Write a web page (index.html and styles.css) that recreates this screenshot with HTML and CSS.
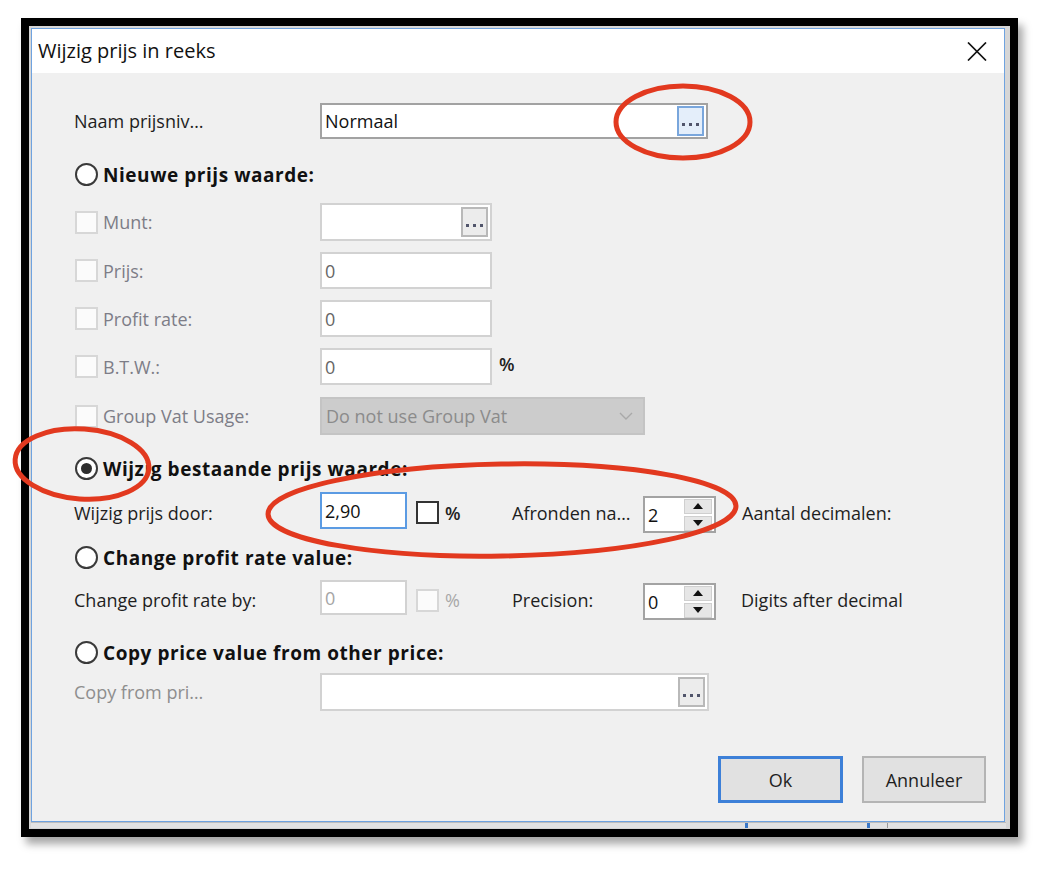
FILE: index.html
```html
<!DOCTYPE html>
<html lang="nl">
<head>
<meta charset="utf-8">
<title>Wijzig prijs in reeks</title>
<link rel="stylesheet" href="styles.css">
</head>
<body>
<div class="frame">
  <div class="dialog">
    <div class="titlebar">
      <span class="title">Wijzig prijs in reeks</span>
      <span class="close" aria-label="Sluiten">
        <svg width="20" height="19" viewBox="0 0 20 19"><path d="M1 0.5 L19 18.5 M19 0.5 L1 18.5" stroke="#111" stroke-width="1.7" fill="none"/></svg>
      </span>
    </div>

    <div class="body">
      <div class="row r-naam">
        <span class="lbl">Naam prijsniv…</span>
        <div class="field w-wide"><span class="val">Normaal</span><span class="dots-btn hot"><svg width="17" height="3" viewBox="0 0 17 3"><rect x="0" y="0" width="3" height="3"/><rect x="7" y="0" width="3" height="3"/><rect x="14" y="0" width="3" height="3"/></svg></span></div>
      </div>

      <div class="row r-opt1">
        <span class="opt"><span class="radio"></span>Nieuwe prijs waarde:</span>
      </div>

      <div class="row r-munt off">
        <span class="lbl"><span class="cb"></span>Munt:</span>
        <div class="field w-mid"><span class="val"></span><span class="dots-btn"><svg width="17" height="3" viewBox="0 0 17 3"><rect x="0" y="0" width="3" height="3"/><rect x="7" y="0" width="3" height="3"/><rect x="14" y="0" width="3" height="3"/></svg></span></div>
      </div>

      <div class="row r-std off">
        <span class="lbl"><span class="cb"></span>Prijs:</span>
        <div class="field w-mid"><span class="val">0</span></div>
      </div>

      <div class="row r-std off">
        <span class="lbl"><span class="cb"></span>Profit rate:</span>
        <div class="field w-mid"><span class="val">0</span></div>
      </div>

      <div class="row r-std off">
        <span class="lbl"><span class="cb"></span>B.T.W.:</span>
        <div class="field w-mid"><span class="val">0</span></div>
        <span class="pct dark">%</span>
      </div>

      <div class="row r-group off">
        <span class="lbl"><span class="cb"></span>Group Vat Usage:</span>
        <div class="combo"><span class="val">Do not use Group Vat</span>
          <svg class="chev" width="14" height="8" viewBox="0 0 14 8"><path d="M1 1 L7 7 L13 1" stroke="#a9a9a9" stroke-width="1.4" fill="none"/></svg>
        </div>
      </div>

      <div class="row r-opt2">
        <span class="opt"><span class="radio on"></span>Wijzig bestaande prijs waarde:</span>
      </div>

      <div class="row r-pair r-door">
        <span class="lbl">Wijzig prijs door:</span>
        <div class="field w-small focus top"><span class="val">2,90</span></div>
        <div class="pctbox"><span class="cb live"></span><span class="pct dark">%</span></div>
        <span class="lbl2">Afronden na…</span>
        <div class="spin bottom"><span class="val">2</span><span class="arrows"><span class="arr"><i class="tri up"></i></span><span class="arr"><i class="tri dn"></i></span></span></div>
        <span class="hint">Aantal decimalen:</span>
      </div>

      <div class="row r-opt3">
        <span class="opt"><span class="radio"></span>Change profit rate value:</span>
      </div>

      <div class="row r-pair r-by">
        <span class="lbl">Change profit rate by:</span>
        <div class="field w-small top faint"><span class="val">0</span></div>
        <div class="pctbox"><span class="cb"></span><span class="pct light">%</span></div>
        <span class="lbl2">Precision:</span>
        <div class="spin bottom"><span class="val">0</span><span class="arrows"><span class="arr"><i class="tri up"></i></span><span class="arr"><i class="tri dn"></i></span></span></div>
        <span class="hint h2">Digits after decimal</span>
      </div>

      <div class="row r-opt4">
        <span class="opt"><span class="radio"></span>Copy price value from other price:</span>
      </div>

      <div class="row r-copy off">
        <span class="lbl">Copy from pri…</span>
        <div class="field w-copy"><span class="val"></span><span class="dots-btn"><svg width="17" height="3" viewBox="0 0 17 3"><rect x="0" y="0" width="3" height="3"/><rect x="7" y="0" width="3" height="3"/><rect x="14" y="0" width="3" height="3"/></svg></span></div>
      </div>

      <div class="row r-buttons">
        <span class="btn default">Ok</span>
        <span class="btn">Annuleer</span>
      </div>
    </div>
  </div>
  <div class="under">
    <span class="gap g1"></span><span class="mark blue"></span>
    <span class="gap g2"></span><span class="mark blue"></span>
    <span class="gap g3"></span><span class="mark grey"></span>
  </div>
</div>

<svg class="marks" width="1058" height="870" viewBox="0 0 1058 870">
  <g fill="none" stroke="#e2391f" stroke-width="5">
    <ellipse cx="683" cy="122" rx="67" ry="36"/>
    <ellipse cx="82" cy="464" rx="67" ry="35" transform="rotate(4 82 464)"/>
    <ellipse cx="502" cy="510" rx="234" ry="46" transform="rotate(-1 502 510)"/>
  </g>
</svg>
</body>
</html>
```

FILE: styles.css
```css
* { box-sizing: border-box; }

html, body {
  margin: 0;
  background: #fff;
}

body {
  position: relative;
  width: 1058px;
  height: 870px;
  overflow: hidden;
  font-family: "Open Sans", "Noto Sans", "Liberation Sans", sans-serif;
  font-size: 18px;
  color: #1e1e1e;
}

/* outer black frame around the window */
.frame {
  margin: 18px 0 0 21px;
  width: 997px;
  height: 819px;
  border: 8px solid #000;
  background: #d6d6d6;
  padding: 2px 4px 0 2px;
  box-shadow: 5px 7px 8px rgba(0, 0, 0, 0.35);
  display: flex;
  flex-direction: column;
}

.dialog {
  width: 974px;
  height: 794px;
  border: 1px solid #6fa3e0;
  background: #f0f0f0;
  display: flex;
  flex-direction: column;
}

.titlebar {
  height: 44px;
  flex: none;
  background: #fff;
  display: flex;
  align-items: center;
  justify-content: space-between;
  padding: 0 17px 0 6px;
}

.title {
  font-size: 20px;
  color: #111;
  margin-top: -1px;
}

.close {
  display: flex;
  width: 20px;
  height: 19px;
}

/* window content */
.body {
  padding: 0 18px 0 42px;
  display: flex;
  flex-direction: column;
}

.row {
  display: flex;
  align-items: center;
}

.lbl {
  width: 246px;
  flex: none;
  display: flex;
  align-items: center;
  gap: 5px;
}

.off .lbl { color: #7d7d87; }
.r-copy .lbl { color: #8e8e8e; }

.r-naam   { margin-top: 30px; height: 36px; }
.r-opt1   { margin-top: 24px; height: 23px; }
.r-munt   { margin-top: 17px; height: 38px; }
.r-std    { margin-top: 11px; height: 37px; }
.r-group  { margin-top: 12px; height: 38px; }
.r-opt2   { margin-top: 22px; height: 23px; }
.r-door   { margin-top: 12px; height: 41px; }
.r-opt3   { margin-top: 13px; height: 23px; }
.r-by     { margin-top: 11px; height: 40px; }
.r-opt4   { margin-top: 21px; height: 23px; }
.r-copy   { margin-top: 9px;  height: 38px; }
.r-buttons {
  margin-top: 45px;
  height: 47px;
  justify-content: flex-end;
  gap: 19px;
}

/* radio options */
.opt {
  display: flex;
  align-items: center;
  gap: 5px;
  font-weight: 700;
  font-size: 19px;
  letter-spacing: 0.55px;
  color: #111;
  margin-left: 1px;
}

.radio {
  width: 23px;
  height: 23px;
  border: 2px solid #3a3a3a;
  border-radius: 50%;
  background: #fff;
  display: flex;
  align-items: center;
  justify-content: center;
  flex: none;
}

.radio.on::after {
  content: "";
  width: 11px;
  height: 11px;
  border-radius: 50%;
  background: #2e2e2e;
}

/* checkboxes */
.cb {
  width: 23px;
  height: 23px;
  flex: none;
  border: 2px solid #d7d7d7;
  background: #fbfbfb;
  margin-left: 1px;
}

.cb.live {
  border-color: #333;
  background: #fff;
}

/* text fields */
.field {
  height: 100%;
  flex: none;
  display: flex;
  align-items: center;
  justify-content: space-between;
  border: 2px solid #d2d2d2;
  background: #fff;
  padding: 0 2px 0 3px;
}

.field .val { color: #666; }
.r-naam .field { border-color: #a2a2a2; }
.r-naam .field .val { color: #111; }

.w-wide  { width: 388px; }
.w-mid   { width: 172px; }
.w-copy  { width: 389px; }
.w-small { width: 87px; height: 37px; }
.r-by .w-small { height: 35px; }

.field.focus {
  border-color: #5b9be3;
}
.field.focus .val { color: #111; }
.field.faint .val { color: #a5a5a5; }

.top { align-self: flex-start; }
.bottom { align-self: flex-end; }

/* "..." lookup buttons */
.dots-btn {
  width: 27px;
  height: 30px;
  flex: none;
  border: 2px solid #b9b9b9;
  background: #ececec;
  display: flex;
  align-items: flex-end;
  justify-content: center;
  padding-bottom: 8px;
}

.dots-btn svg { fill: #51556b; }

.dots-btn.hot {
  border-color: #79a6dc;
  background: #e4eefa;
}

/* disabled combo box */
.combo {
  width: 325px;
  height: 100%;
  display: flex;
  align-items: center;
  justify-content: space-between;
  background: #cccccc;
  border: 2px solid #c4c4c4;
  padding: 0 10px 0 4px;
  color: #8b8b8b;
}

.pct {
  margin-left: 6px;
  font-weight: 600;
}
.pct.dark { color: #222; }
.pct.light { color: #a8a8a8; font-weight: 400; }
.r-std .pct { margin-left: 7px; margin-top: -6px; }

.pctbox {
  width: 105px;
  flex: none;
  display: flex;
  align-items: center;
  padding-left: 8px;
}

.lbl2 {
  width: 131px;
  flex: none;
}

/* numeric spinner */
.spin {
  width: 73px;
  height: 37px;
  flex: none;
  border: 2px solid #a3a3a3;
  background: #fff;
  display: flex;
  align-items: center;
  padding: 0 2px 0 3px;
}

.spin .val { color: #111; }

.arrows {
  margin-left: auto;
  width: 28px;
  display: flex;
  flex-direction: column;
  gap: 2px;
}

.arr {
  height: 15px;
  background: #e6e6e6;
  border: 1px solid #cfcfcf;
  display: flex;
  align-items: center;
  justify-content: center;
}

.tri {
  width: 0;
  height: 0;
  border-left: 5px solid transparent;
  border-right: 5px solid transparent;
}
.tri.up { border-bottom: 6px solid #111; }
.tri.dn { border-top: 6px solid #111; }

.hint { margin-left: 26px; }
.hint.h2 { margin-left: 25px; }

/* dialog buttons */
.btn {
  height: 47px;
  width: 124px;
  display: flex;
  align-items: center;
  justify-content: center;
  background: #e1e1e1;
  border: 2px solid #b4b4b4;
  color: #1e1e1e;
}

.btn.default {
  width: 125px;
  border: 3px solid #3d80d8;
}

/* strip of the window lying underneath */
.under {
  height: 6px;
  display: flex;
  background: #e2e2e2;
  border-top: 1px solid #bdbdbd;
}
.gap.g1 { width: 714px; }
.gap.g2 { width: 119px; }
.gap.g3 { width: 17px; }
.mark { width: 3px; }
.mark.blue { background: #3a78c8; }
.mark.grey { width: 1px; background: #9a9a9a; }

/* red annotation rings drawn over the window */
.marks {
  position: absolute;
  left: 0;
  top: 0;
  pointer-events: none;
}
```
